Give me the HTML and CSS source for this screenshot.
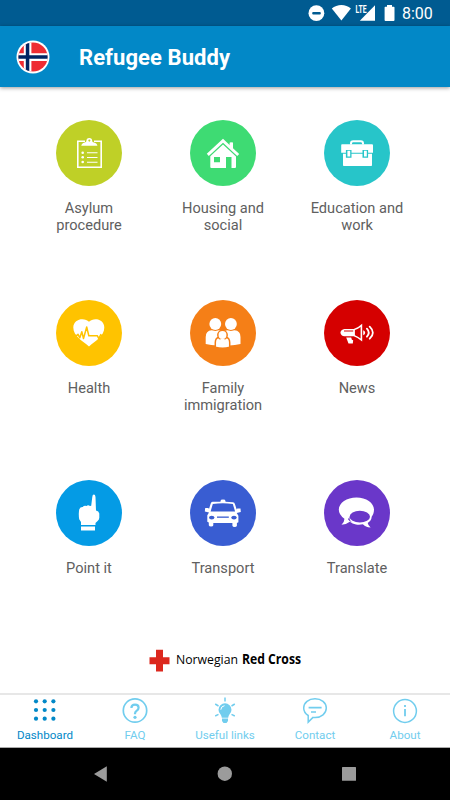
FILE: index.html
```html
<!DOCTYPE html>
<html lang="en">
<head>
  <meta charset="UTF-8" />
  <meta name="viewport" content="width=device-width, initial-scale=1.0"/>
  <title>Refugee Buddy</title>
  <link rel="stylesheet" href="styles.css">
</head>

<body>
  <div class="status-bar">
    <svg width="66" height="26" viewBox="0 0 66 26" fill="#fff">
      <circle cx="8.4" cy="13.2" r="7.9"/>
      <rect x="4.2" y="11.9" width="8.6" height="2.5" rx="1" fill="#005b91"/>
      <path d="M23.8 8.6C29 3.800 37.800 3.800 42.900 8.600L33.400 20.500z"/>
      <path d="M67 5.300V20.700H51.800z"/>
      <text class="lte" x="47.600" y="12.700" textLength="11" lengthAdjust="spacingAndGlyphs">LTE</text>
    </svg>
    <svg class="battery" width="11" height="26" viewBox="0 0 11 26" fill="#fff">
      <path d="M3 5h5v1.700h1.700q.8 0 .8.900v12.500q0 .9-.9.900H1.500q-.9 0-.9-.9V7.600q0-.9.8-.9H3z"/>
    </svg>
    <span class="clock">8:00</span>
  </div>

  <header>
    <svg class="flag" width="34" height="34" viewBox="0 0 34 34">
      <clipPath id="round"><circle cx="17" cy="17" r="14.600"/></clipPath>
      <circle cx="17" cy="17" r="16.500" fill="#fff"/>
      <g clip-path="url(#round)">
        <path fill="#ee2c33" d="M0 0h34v34H0z"/>
        <path fill="#fff" d="M7.800 0h7.600v34H7.800zM0 13.300h34v7.600H0z"/>
        <path fill="#002463" d="M9.800 0h3.500v34H9.800zM0 15.300h34v3.500H0z"/>
      </g>
    </svg>
    <h1>Refugee Buddy</h1>
  </header>

  <main>
    <div class="grid">
      <a class="tile">
        <span class="circle lime">
          <svg viewBox="0 0 66 66" fill="#fff">
            <path fill="none" stroke="#fff" stroke-width="1.600" d="M29 21.300h-7.200v26h23.400v-26H38"/>
            <path fill-rule="evenodd" d="M25.300 25.800q.2-2.800 3.400-3.400 1.700-.3 1.700-1.400a2.900 2.900 0 0 1 5.800 0q0 1.100 1.700 1.400 3.300.6 3.500 3.400zM33.300 19.400a1 1 0 1 0 .1 0z"/>
            <path d="M31 32.300h10.500v1H31zM31 37h10.500v1H31zM31 41.700h10.500v1H31z"/>
            <circle cx="26.700" cy="32.700" r="1.300"/><circle cx="26.700" cy="37.300" r="1.300"/><circle cx="26.700" cy="42" r="1.300"/>
          </svg>
        </span>
        <span class="label">Asylum<br>procedure</span>
      </a>
      <a class="tile">
        <span class="circle green">
          <svg viewBox="0 0 66 66" fill="#fff">
            <path d="M16.800 33.800 33 18.800l6.600 6.100v-2.100l1.200-.6 2.200.3v5.700l6.200 5.700-2 2.200L33 22.800 18.800 36z"/>
            <path fill-rule="evenodd" d="M20.300 36.300 33 24.500l13 12V47q0 1-1 1h-3.500V37H36v11H21.300q-1 0-1-1zM24 37v5.300h6V37z"/>
          </svg>
        </span>
        <span class="label">Housing and<br>social</span>
      </a>
      <a class="tile">
        <span class="circle teal">
          <svg viewBox="0 0 66 66" fill="#fff">
            <path fill="none" stroke="#fff" stroke-width="2" d="M27 24.500v-1q0-2.300 2.300-2.300h7.400q2.300 0 2.300 2.300v1"/>
            <path d="M18 24.300h30q1 0 1 1v7.400H17.200v-7.400q0-1 .8-1zM19 33.800h29v11.400q0 .8-.8.800H19.800q-.8 0-.8-.8z"/>
            <path fill="#27c5c9" d="M21.900 30h5.600v7.700h-5.600zM38.500 30h5.600v7.700h-5.600z"/>
            <path d="M23.400 30.700h2.800v5.800h-2.800zM40 30.700h2.800v5.800H40z"/>
          </svg>
        </span>
        <span class="label">Education and<br>work</span>
      </a>

      <a class="tile">
        <span class="circle yellow">
          <svg viewBox="0 0 66 66" fill="#fff">
            <path d="M33 21.800c4.300-4.600 15.300-3.200 15.300 5.800 0 8.200-8.600 13.400-15.300 18.900-6.700-5.500-15.700-10.700-15.700-18.900 0-9 11.400-10.400 15.700-5.800z"/>
            <path fill="none" stroke="#ffc300" stroke-width="1.500" stroke-linejoin="round" d="M17 35.600h3.600l1.400-1.300 1.800 3.500 2-6.100 1.700 6.800 3.200-11.500 2.100 8.700h8.500l1.500 3 2-4.100 1 1.500H49"/>
          </svg>
        </span>
        <span class="label">Health</span>
      </a>
      <a class="tile">
        <span class="circle orange">
          <svg viewBox="0 0 66 66" fill="#fff">
            <circle cx="25.300" cy="24" r="5.900"/><circle cx="40.900" cy="24" r="5.900"/>
            <path d="M15.700 44V37q0-6.300 6-6.700l3.600.8 3.600-.8q2.800.3 4.200 2 1.400-1.700 4.200-2l3.600.8 3.600-.8q6 .4 6 6.700v7q-8.800 2.300-17.400 1-8.600 1.300-17.400-1z"/>
            <g stroke="#f57f17" stroke-width="1.500">
              <path d="M25.300 47.300v-4.700q0-5 4-5.400l3.200.7 3.200-.7q4 .4 4 5.400v4.700q-7 2-14.400 0z"/>
              <circle cx="32.500" cy="35" r="4.700"/>
            </g>
            <path d="M30.300 38.800h4.400v2.200h-4.400z"/>
          </svg>
        </span>
        <span class="label">Family<br>immigration</span>
      </a>
      <a class="tile">
        <span class="circle red">
          <svg viewBox="0 0 66 66" fill="#fff">
            <path d="M20.500 29h9.200q5-1.800 8.500-5.200v17.600q-3.500-3.300-8.500-5.100h-9.200q-3.600-.6-4.100-3.600.4-3.100 4.100-3.700z"/>
            <path fill="#d50000" d="M30.900 30.100q3.300-1.100 5.700-3.200v11.700q-2.400-2.100-5.700-3.300zM20 30.600h9.200v1H20z"/>
            <path d="M22.200 37.500h5l.7 2.300 1.300.5-.4 3.300h-4.300zM39.200 30.300q2 .7 2 2.400t-2 2.500z"/>
            <path fill="none" stroke="#fff" stroke-width="1.800" stroke-linecap="round" d="M42.900 28.700q3.700 4 0 8M45.700 26.700q6.300 6 0 12"/>
          </svg>
        </span>
        <span class="label">News</span>
      </a>

      <a class="tile">
        <span class="circle blue">
          <svg viewBox="0 0 66 66" fill="#fff">
            <path d="M36.300 17q.2-2.400 1.600-2.400t1.600 2.400l.5 13.500q2.800.5 3.300 3v4.300q0 2-1.700 3.300L39.500 43v2H25v-3l-1.800-2.700q-.9-6 .1-10 .9-2.400 3.500-2.200 1-1.900 3.700-1.200 1.700-1.200 3.500.2l1.200-.3z"/>
            <path d="M25 46.500h14v4H25z"/>
          </svg>
        </span>
        <span class="label">Point it</span>
      </a>
      <a class="tile">
        <span class="circle indigo">
          <svg viewBox="0 0 66 66" fill="#fff">
            <path fill-rule="evenodd" d="M30.500 21.700v-.7q0-1.400 2.500-1.400t2.500 1.400v.7l7.500.6q1.500.2 1.900 1.600l1.800 5.700.6-1.100h3.200l.3 3.500-4.100 1.100 1.700 2.600v6.500l-1.500.8v2.700q-.3 1.300-2.300 1.300t-2.200-1.300V43H23.300v2.200q-.2 1.300-2.200 1.300t-2.300-1.300v-2.700l-1.500-.8v-6.500l1.700-2.600-4.200-1.100.4-3.500h3.200l.6 1.100 1.700-5.700q.4-1.400 1.900-1.600zM22.800 24l-2.200 7.500h24.500L42.800 24q-9.800-1.300-20 0z"/>
            <g fill="#395dd2"><ellipse cx="21.700" cy="37.600" rx="2.700" ry="1.900"/><ellipse cx="44" cy="37.600" rx="2.700" ry="1.900"/><rect x="27" y="36.500" width="11.800" height="1.300"/></g>
          </svg>
        </span>
        <span class="label">Transport</span>
      </a>
      <a class="tile">
        <span class="circle purple">
          <svg viewBox="0 0 66 66" fill="#fff">
            <path d="M32.500 17.500c9.600 0 17.500 5.400 17.500 12.100 0 3.300-1 5.400-2.300 7.200-.1 3-1.700 4.900-4 6.100q.4 2.400 2.900 4.600-5.300-.3-7.700-3.200-3.400.8-6.900.2-3.600-.7-6.200-2.700-3.500 2.900-8.300 2.900 3-2.700 2.900-6-5.600-3.700-5.600-9.100c0-6.700 8-12.100 17.700-12.100z"/>
            <ellipse cx="35.800" cy="36.700" rx="10.200" ry="5.900" fill="#6a37c9"/>
            <path fill="#6a37c9" d="M25.600 36.700q-.7 3.400 3 6-3.300-1-4.600-3.400z"/>
          </svg>
        </span>
        <span class="label">Translate</span>
      </a>
    </div>

    <div class="brand">
      <svg width="21" height="23" viewBox="0 0 21 23">
        <path fill="#dc281e" d="M7 .7h7v7.600h6.500v7H14v7.200H7v-7.200H.5v-7H7z"/>
      </svg>
      <svg class="brand-name" width="134" height="23" viewBox="0 0 134 23">
        <text x="0" y="15" textLength="62" lengthAdjust="spacingAndGlyphs">Norwegian</text>
        <text class="bold" x="66" y="15" textLength="59" lengthAdjust="spacingAndGlyphs">Red Cross</text>
      </svg>
    </div>
  </main>

  <nav class="tabs">
    <a class="active">
      <svg viewBox="0 0 30 30" fill="#0288c7">
        <circle cx="6" cy="6.300" r="2.100"/><circle cx="14.700" cy="6.300" r="2.100"/><circle cx="23.400" cy="6.300" r="2.100"/>
        <circle cx="6" cy="15" r="2.100"/><circle cx="14.700" cy="15" r="2.100"/><circle cx="23.400" cy="15" r="2.100"/>
        <circle cx="6" cy="23.700" r="2.100"/><circle cx="14.700" cy="23.700" r="2.100"/><circle cx="23.400" cy="23.700" r="2.100"/>
      </svg>
      <span>Dashboard</span>
    </a>
    <a>
      <svg viewBox="0 0 30 30" fill="none" stroke="#71cdee">
        <circle cx="15" cy="15.500" r="11.700" stroke-width="1.700"/>
        <path stroke-width="2.200" d="M11.400 13q0-3.400 3.600-3.400t3.600 3.100q0 1.600-1.800 2.900-1.800 1.200-1.800 2.900v.8"/>
        <circle cx="15" cy="22.300" r="1.600" fill="#71cdee" stroke="none"/>
      </svg>
      <span>FAQ</span>
    </a>
    <a>
      <svg viewBox="0 0 30 30" fill="#71cdee">
        <path d="M15 8.300a6.500 6.500 0 0 1 6.500 6.500q0 2.700-2.100 4.800-1 1.200-1.200 3.200h-6.400q-.2-2-1.200-3.200-2.100-2.100-2.100-4.800A6.500 6.500 0 0 1 15 8.300zM12 23.500h6v2.500l-1.500 2h-3L12 26z"/>
        <path fill="none" stroke="#fff" d="M10.800 14.700q.2-3.500 3.700-4"/>
        <path fill="none" stroke="#71cdee" stroke-width="1.500" d="M15 2.500v4M5.200 9l3.300 2M5.200 21l3.300-1.600M24.800 9l-3.300 2M24.800 21l-3.300-1.600"/>
      </svg>
      <span>Useful links</span>
    </a>
    <a>
      <svg viewBox="0 0 30 30" fill="none" stroke="#71cdee" stroke-width="1.500">
        <path d="M15 3.800c6.300 0 11.300 3.900 11.300 9.300S21.300 22.600 15 22.600q-1 0-2-.2l-4.800 4.700v-6.600Q3.700 17.800 3.700 13.100c0-5.400 5-9.300 11.300-9.300z"/>
        <path stroke-width="1.700" d="M8.600 12.700h13M11 17h5"/>
      </svg>
      <span>Contact</span>
    </a>
    <a>
      <svg viewBox="0 0 30 30" fill="none" stroke="#71cdee" stroke-width="1.500">
        <circle cx="15" cy="16" r="11.400"/>
        <path stroke-width="1.800" d="M15 14v7.300M15 9.900v2"/>
      </svg>
      <span>About</span>
    </a>
  </nav>

  <div class="system-nav">
    <svg width="450" height="52" viewBox="0 0 450 52" fill="#9b9b9b">
      <path d="M94 26 106.800 18.300V33.800z"/>
      <circle cx="224.800" cy="25.700" r="7.200"/>
      <rect x="342" y="19" width="14" height="13.700" rx=".5"/>
    </svg>
  </div>
</body>
</html>
```
FILE: styles.css
```css
* {
  box-sizing: border-box;
}

body {
  margin: 0;
  width: 450px;
  height: 800px;
  overflow: hidden;
  display: flex;
  flex-direction: column;
  background-color: #fff;
  font-family: Roboto, "Liberation Sans", sans-serif;
}

svg {
  display: block;
  flex: none;
}

.status-bar {
  height: 26px;
  flex: none;
  display: flex;
  justify-content: flex-end;
  align-items: center;
  padding-right: 17px;
  background-color: #005b91;
  color: #fff;
}

.status-bar svg {
  overflow: visible;
}

.lte {
  font-size: 10.5px;
  font-weight: bold;
}

.battery {
  margin-left: 10px;
}

.clock {
  margin-left: 7px;
  width: 31px;
  font-size: 16px;
  line-height: 26px;
  padding-top: 2px;
  white-space: nowrap;
}

header {
  height: 61px;
  flex: none;
  display: flex;
  align-items: center;
  padding: 0 16px;
  background-color: #0288c7;
  color: #fff;
  box-shadow: 0 1px 4px rgba(0,0,0,0.4);
}

h1 {
  margin: 3px 0 0 29px;
  font-size: 22px;
  font-weight: bold;
  line-height: 26px;
  letter-spacing: 0.07px;
}

main {
  flex: 1;
  padding-top: 33.3px;
}

.grid {
  display: grid;
  grid-template-columns: repeat(3, 134px);
  grid-auto-rows: 180.1px;
  justify-content: center;
  margin-right: 4px;
}

.tile {
  display: flex;
  flex-direction: column;
  align-items: center;
}

.circle {
  width: 66px;
  height: 66px;
  border-radius: 50%;
}

.lime { background-color: #bfd027; }
.green { background-color: #3edb73; }
.teal { background-color: #27c5c9; }
.yellow { background-color: #ffc300; }
.orange { background-color: #f57f17; }
.red { background-color: #d50000; }
.blue { background-color: #049be5; }
.indigo { background-color: #395dd2; }
.purple { background-color: #6a37c9; }

.label {
  margin-top: 13.7px;
  color: #606060;
  font-size: 14.6px;
  line-height: 17.3px;
  text-align: center;
  white-space: nowrap;
}

.brand {
  display: flex;
  margin: -12px 0 0 149px;
}

.brand-name {
  margin-left: 6px;
  font-family: "Open Sans", sans-serif;
  font-size: 13.5px;
}

.bold {
  font-weight: bold;
}

.tabs {
  height: 55px;
  flex: none;
  display: grid;
  grid-template-columns: repeat(5, 90px);
  border-top: 2px solid #e7e7e7;
  border-bottom: 1px solid #aaa;
  color: #71cdee;
}

.tabs a {
  display: flex;
  flex-direction: column;
  align-items: center;
  font-size: 11.6px;
  line-height: 14px;
}

.tabs svg {
  width: 30px;
  height: 30px;
}

.tabs span {
  margin-top: 3px;
}

.tabs .active {
  color: #0288c7;
}

.system-nav {
  height: 52px;
  flex: none;
  background-color: #000;
}
```
